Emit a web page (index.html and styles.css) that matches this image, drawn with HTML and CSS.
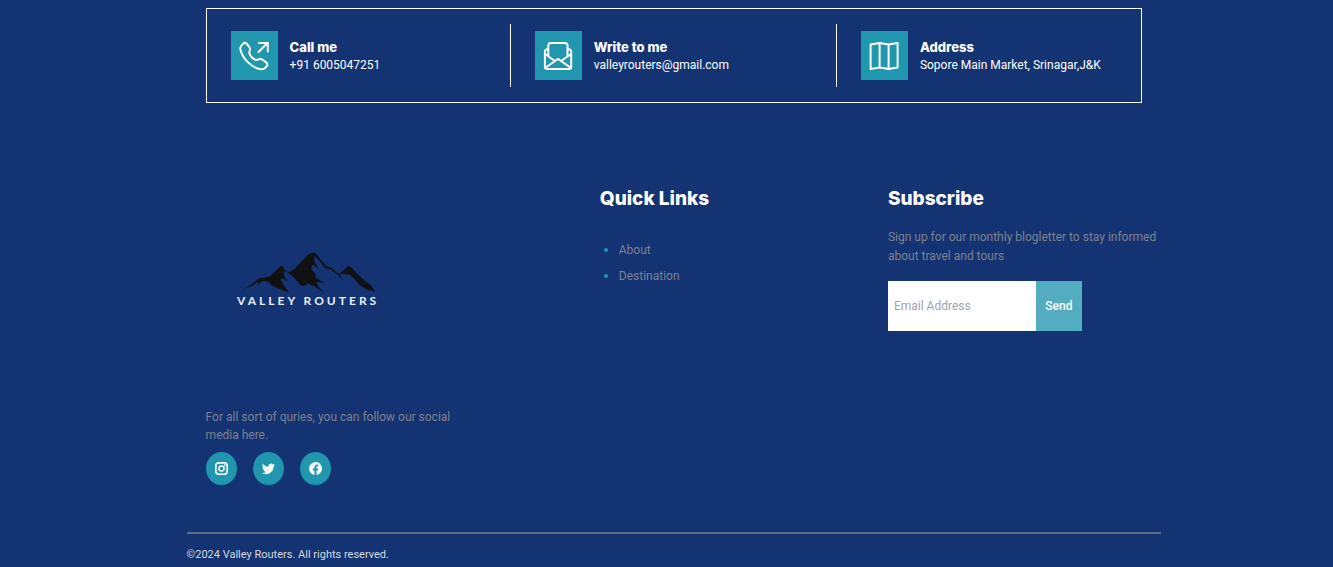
FILE: index.html
```html
<!DOCTYPE html>
<html lang="en">
<head>
<meta charset="utf-8">
<meta name="viewport" content="width=device-width, initial-scale=1">
<title>Valley Routers</title>
<link rel="stylesheet" href="styles.css">
</head>
<body>
<footer class="footer">
  <section class="contacts">
    <div class="contact">
      <span class="contact-icon">
        <svg viewBox="0 0 30 30" aria-hidden="true"><path d="M1.8 5.5 4 2.7Q5.8 1 7.8 2.8L10 5.5Q11.3 7.2 11 9L10.2 11.3C10.6 15 14.5 18.8 17.8 19L20.3 18.1Q22.2 17.6 24 19L27.4 21.6Q29 23 28.1 24.8L25.8 27.2Q23.8 28.9 20.8 28.1C11.5 26 3.7 17.2 1.6 9.2Q.9 7 1.8 5.5Z"/><path d="M19.5 11 28.7 1.8M20 2h8.8v8.6"/></svg>
      </span>
      <div><h3>Call me</h3><p>+91 6005047251</p></div>
    </div>
    <div class="contact">
      <span class="contact-icon">
        <svg viewBox="0 0 30 30" aria-hidden="true"><path d="M5.3 15.5V4.5Q5.3 2 7.8 2H22Q24.5 2 24.5 4.5V15.5M5.2 7.2 1.9 9.6V26Q1.9 28 4 28H26Q28.2 28 28.2 26V9.6L24.6 7.2M2 13 11.8 20M28 13 18.2 20M2.4 26.8 15 17.9 27.7 26.8"/></svg>
      </span>
      <div><h3>Write to me</h3><p>valleyrouters@gmail.com</p></div>
    </div>
    <div class="contact">
      <span class="contact-icon">
        <svg viewBox="0 0 30 30" aria-hidden="true"><path d="M1.6 3.6 10.6 2 19.6 3.6 28.6 2V26.4L19.6 28 10.6 26.4 1.6 28ZM10.6 2V26.4M19.6 3.6V28"/></svg>
      </span>
      <div><h3>Address</h3><p>Sopore Main Market, Srinagar,J&amp;K</p></div>
    </div>
  </section>

  <div class="columns">
    <section class="brand">
      <div class="logo">
        <svg viewBox="30 34 402 124" aria-hidden="true"><path d="M34 153 58 136 72 126 90 112 103 111 121 106 136 92 152 76 158 78 162 88 176 95 192 86 214 62 232 43 248 37 258 45 272 64 285 78 300 83 315 97 324 99 347 77 356 80 376 101 397 121 414 133 428 154 407 143 413 151 382 133 355 103 332 100 323 104 339 124 313 99 298 87 281 83 264 62 250 47 250 64 263 87 245 72 240 86 253 101 254 112 280 127 256 123 260 136 277 154 249 137 226 126 229 133 211 135 199 120 185 106 169 93 160 94 162 107 173 124 157 112 151 116 157 129 176 155 147 143 128 135 115 124 99 120 84 133 87 123 65 136 51 142Z"/></svg>
        <span>VALLEY ROUTERS</span>
      </div>
      <p class="muted">For all sort of quries, you can follow our social media here.</p>
      <nav class="social" aria-label="Social media">
        <a href="#" aria-label="Instagram"><svg viewBox="0 0 16 16"><rect x="1" y="1" width="14" height="14" rx="3.5" fill="none" stroke="currentColor" stroke-width="2"/><circle cx="8" cy="8" r="3.2" fill="none" stroke="currentColor" stroke-width="1.8"/><circle cx="12" cy="4" r="1.1"/></svg></a>
        <a href="#" aria-label="Twitter"><svg viewBox="0 0 16 16"><path d="M5.03 15c6.04 0 9.34-5 9.34-9.33 0-.14 0-.28-.01-.42A6.7 6.7 0 0 0 16 3.54a6.7 6.7 0 0 1-1.89.52 3.3 3.3 0 0 0 1.45-1.82 6.5 6.5 0 0 1-2.09.79 3.29 3.29 0 0 0-5.59 3A9.32 9.32 0 0 1 1.11 2.6 3.29 3.29 0 0 0 2.13 7a3.2 3.2 0 0 1-1.49-.41v.04a3.29 3.29 0 0 0 2.63 3.22 3.2 3.2 0 0 1-1.48.06 3.29 3.29 0 0 0 3.07 2.28A6.6 6.6 0 0 1 0 13.53 9.3 9.3 0 0 0 5.03 15"/></svg></a>
        <a href="#" aria-label="Facebook"><svg viewBox="0 0 16 16"><path d="M16 8.05A8 8 0 1 0 6.75 16v-5.62H4.72V8.05h2.03V6.28c0-2.02 1.2-3.13 3.02-3.13.88 0 1.79.16 1.79.16v1.98h-1.01c-.99 0-1.3.62-1.3 1.26v1.5h2.22l-.35 2.33H9.25V16A8 8 0 0 0 16 8.05"/></svg></a>
      </nav>
    </section>

    <section>
      <h2>Quick Links</h2>
      <ul class="links">
        <li><a href="#">About</a></li>
        <li><a href="#">Destination</a></li>
      </ul>
    </section>

    <section>
      <h2>Subscribe</h2>
      <p class="muted signup">Sign up for our monthly blogletter to stay informed about travel and tours</p>
      <form class="subscribe">
        <input type="email" placeholder="Email Address" aria-label="Email Address">
        <button type="button">Send</button>
      </form>
    </section>
  </div>

  <p class="copyright">©2024 Valley Routers. All rights reserved.</p>
</footer>
</body>
</html>
```
FILE: styles.css
```css
* {
  box-sizing: border-box;
}

body {
  margin: 0;
  background: #143373;
  color: #fff;
  font: 12px/18px Roboto, "Liberation Sans", sans-serif;
}

h2,
h3,
p,
ul {
  margin: 0;
  padding: 0;
}

h2 {
  font: 800 19px/30px Inter, sans-serif;
}

h3 {
  font: 800 13px/18px Inter, sans-serif;
}

a {
  color: inherit;
  text-decoration: none;
}

.footer {
  padding: 8px 12.9% 0 14%;
}

.contacts {
  display: grid;
  grid-template-columns: 304fr 326fr 304fr;
  margin: 0 19px;
  padding: 15px 0;
  border: 1px solid #fff;
}

.contact {
  display: flex;
  align-items: center;
  gap: 12px;
  height: 63px;
  padding-left: 24px;
  border-right: 1px solid #fff;
}

.contact:last-child {
  border-right: 0;
}

.contact-icon {
  display: grid;
  flex: none;
  place-items: center;
  width: 47px;
  height: 49px;
  background: #2196af;
}

.contact-icon svg {
  width: 30px;
  height: 30px;
  fill: none;
  stroke: #fff;
  stroke-width: 2;
  stroke-linejoin: round;
  stroke-linecap: round;
}

.columns {
  display: grid;
  grid-template-columns: 394fr 288fr 273fr;
  margin: 81px 0 0 19px;
}

.muted,
.links {
  color: #7c818d;
}

.brand .muted {
  max-width: 260px;
}

.logo {
  display: flex;
  flex-direction: column;
  align-items: center;
  width: 205px;
  height: 224px;
  padding-top: 67px;
}

.logo svg {
  width: 138px;
  height: 43px;
  fill: #111;
}

.logo span {
  color: #e9edf5;
  font: 700 12px/14px Lato, sans-serif;
  letter-spacing: 3px;
  white-space: nowrap;
}

.social {
  display: flex;
  gap: 16px;
  margin-top: 8px;
}

.social a {
  display: grid;
  place-items: center;
  width: 31px;
  height: 33px;
  border-radius: 50%;
  background: #2196af;
}

.social svg {
  width: 13px;
  height: 13px;
  fill: currentColor;
}

.links {
  margin-top: 23px;
  padding-left: 19px;
  line-height: 25px;
}

.links li::marker {
  color: #2196af;
  font-size: 14px;
}

.signup {
  margin-top: 14px;
  line-height: 19px;
}

.subscribe {
  display: flex;
  height: 50px;
  margin-top: 15px;
}

.subscribe input,
.subscribe button {
  border: 0;
  border-radius: 0;
  font: inherit;
}

.subscribe input {
  width: 148px;
  padding: 0 6px;
  background: #fff;
}

.subscribe input::placeholder {
  color: #9ca3af;
}

.subscribe button {
  width: 46px;
  padding: 0;
  background: #53adc0;
  color: #fff;
  font-weight: 500;
}

.copyright {
  margin-top: 47px;
  padding-top: 12px;
  border-top: 2px solid #5f6b84;
  color: #d5d8df;
  font-size: 11px;
}
```
